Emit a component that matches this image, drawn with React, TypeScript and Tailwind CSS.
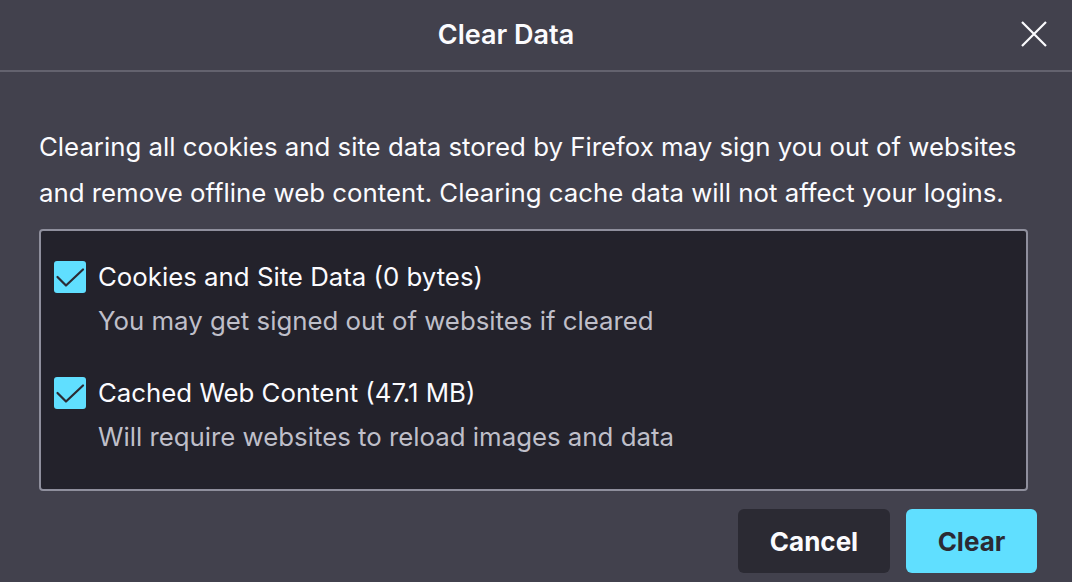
const items = [
  {
    id: "cookies",
    label: "Cookies and Site Data (0 bytes)",
    hint: "You may get signed out of websites if cleared",
  },
  {
    id: "cache",
    label: "Cached Web Content (47.1 MB)",
    hint: "Will require websites to reload images and data",
  },
];

const CheckIcon = () => (
  <svg width="32" height="32" viewBox="0 0 32 32" fill="none">
    <path
      d="M3.5 16 L12 24.5 L29 8.5"
      stroke="#2b2a33"
      strokeWidth="2.2"
      strokeLinecap="round"
      strokeLinejoin="round"
    />
  </svg>
);

const App = () => {
  return (
    <div
      className="w-[1072px] h-[582px] bg-[#42414d] text-[#fbfbfe] flex flex-col overflow-hidden"
      style={{ fontFamily: "Inter, 'Noto Sans', sans-serif" }}
    >
      {/* header */}
      <div className="relative h-[72px] flex items-center justify-center pr-[60px] border-b-2 border-[#63626e] shrink-0">
        <h1 className="text-[27px] font-semibold">Clear Data</h1>
        <button className="absolute right-[24px] top-[20px] w-[28px] h-[28px] flex items-center justify-center">
          <svg width="26" height="26" viewBox="0 0 26 26" fill="none">
            <path d="M1 1 L25 25 M25 1 L1 25" stroke="#fbfbfe" strokeWidth="2.2" />
          </svg>
        </button>
      </div>

      {/* body */}
      <div className="pl-[39px] pr-[44px] pt-[52px]">
        <p className="text-[25.8px] leading-[46px] whitespace-nowrap">
          Clearing all cookies and site data stored by Firefox may sign you out of websites
          <br />
          and remove offline web content. Clearing cache data will not affect your logins.
        </p>

        <div className="mt-[13px] h-[262px] bg-[#23222b] border-2 border-[#8f8f9d] rounded-[4px] pl-[13px] pt-[30px] flex flex-col gap-[40px]">
          {items.map((item) => (
            <div key={item.id} className="flex flex-col">
              <div className="flex items-center gap-[12px]">
                <div className="w-[32px] h-[32px] rounded-[3px] bg-[#60dfff] flex items-center justify-center">
                  <CheckIcon />
                </div>
                <span className="text-[25.8px] leading-[32px]">{item.label}</span>
              </div>
              <span className="ml-[44px] mt-[12px] text-[25.8px] leading-[32px] text-[#bfbfc9]">
                {item.hint}
              </span>
            </div>
          ))}
        </div>

        {/* actions */}
        <div className="mt-[18px] flex justify-end gap-[16px] mr-[-9px]">
          <button className="w-[152px] h-[64px] rounded-[6px] bg-[#2b2a33] text-[26px] font-bold text-[#fbfbfe]">
            Cancel
          </button>
          <button className="w-[131px] h-[64px] rounded-[6px] bg-[#60dfff] text-[26px] font-bold text-[#2b2a33]">
            Clear
          </button>
        </div>
      </div>
    </div>
  );
};

export default App;
